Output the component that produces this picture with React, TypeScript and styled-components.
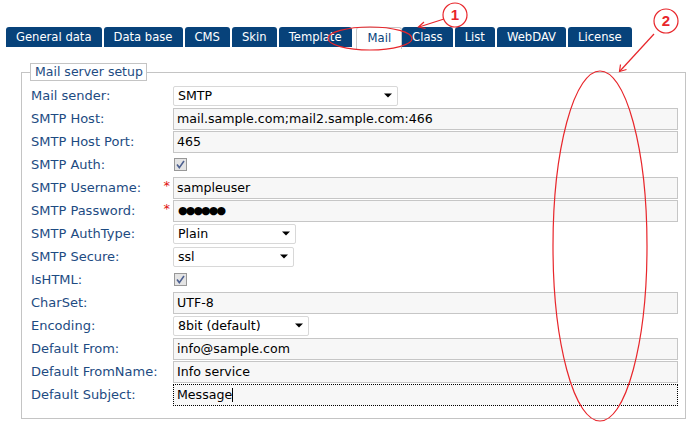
import React from "react";
import styled, { createGlobalStyle, css } from "styled-components";

// GLOBAL
const GlobalStyle = createGlobalStyle`
  html, body {
    margin: 0;
    padding: 0;
    background: #ffffff;
  }
  body {
    font-family: "DejaVu Sans", Verdana, sans-serif;
  }
`;

const BLUE = "#07427a";
const LABEL = "#1d4b82";
const RED = "#e8262b";

// LAYOUT
const Page = styled.div`
  position: relative;
  width: 691px;
  height: 426px;
  box-sizing: border-box;
  padding: 27px 5px 0 6px;
  overflow: hidden;
`;

const TabBar = styled.div`
  display: flex;
  gap: 2px;
  height: 22px;
`;

const Tab = styled.div<{ $active?: boolean }>`
  height: 20px;
  line-height: 20px;
  padding: 0 10px 0 10px;
  font-size: 11.6px;
  color: #ffffff;
  background: ${BLUE};
  border-radius: 3px 3px 0 0;
  white-space: nowrap;
  ${({ $active }) =>
    $active &&
    css`
      height: 21px;
      line-height: 20px;
      margin: 0 -2px 0 2px;
      background: #ffffff;
      color: ${BLUE};
      border: 1px solid #c8c8c8;
      border-bottom: none;
      padding: 0 10px 0 11px;
    `}
`;

const FieldSet = styled.fieldset`
  margin: 14px 0 0 15px;
  border: 1px solid #c4c4c4;
  padding: 3px 7px 12px 9px;
  min-inline-size: 0;
`;

const Legend = styled.legend`
  margin-left: -1px;
  border: 1px solid #c4c4c4;
  padding: 0 3px 0 4px;
  line-height: 16px;
  font-size: 12.5px;
  color: ${LABEL};
`;

const FormGrid = styled.div`
  display: grid;
  grid-template-columns: 142px 1fr;
  grid-auto-rows: 23px;
  align-items: center;
`;

const Label = styled.div`
  display: flex;
  justify-content: space-between;
  align-items: center;
  font-size: 13px;
  color: ${LABEL};
  white-space: nowrap;
`;

const Required = styled.span`
  color: #e01010;
  font-size: 13px;
  margin-right: 3px;
  position: relative;
  top: -2px;
`;

const Control = styled.div`
  display: flex;
  align-items: center;
`;

const Field = styled.div<{ $focused?: boolean }>`
  flex: 1;
  height: 22px;
  box-sizing: border-box;
  border: 1px solid #c6c6c6;
  background: #f7f7f7;
  padding: 0 3px;
  line-height: 20px;
  font-size: 12.6px;
  color: #000000;
  white-space: nowrap;
  overflow: hidden;
  display: flex;
  align-items: center;
  ${({ $focused }) =>
    $focused &&
    css`
      border: 1px dotted #000000;
    `}
`;

const Dots = styled.span`
  font-size: 11px;
  letter-spacing: -1.9px;
  padding-left: 1px;
`;

const Caret = styled.span`
  display: inline-block;
  width: 1px;
  height: 14px;
  background: #000000;
`;

const SelectBox = styled.div<{ $width: number }>`
  width: ${({ $width }) => $width}px;
  height: 20px;
  box-sizing: border-box;
  border: 1px solid #d8d8d8;
  border-radius: 2px;
  background: #ffffff;
  padding: 0 5px 0 4px;
  display: flex;
  align-items: center;
  justify-content: space-between;
  font-size: 12.6px;
  color: #000000;
`;

const CheckWrap = styled.div`
  width: 13px;
  height: 13px;
  margin-left: 1px;
  display: flex;
`;

const Overlay = styled.svg`
  position: absolute;
  left: 0;
  top: 0;
  pointer-events: none;
`;

// PARTS
const Arrow = () => (
  <svg width="8" height="5" viewBox="0 0 8 5">
    <path d="M0 0.5 H8 L4 4.5 Z" fill="#000" />
  </svg>
);

const CheckBox = () => (
  <CheckWrap>
    <svg width="13" height="13" viewBox="0 0 13 13">
      <rect x="0.5" y="0.5" width="12" height="12" fill="#e4e4e4" stroke="#989898" />
      <path d="M3 6.5 L5.3 9.6 L10 3" fill="none" stroke="#4d6090" strokeWidth="1.6" />
    </svg>
  </CheckWrap>
);

type Row = {
  label: string;
  kind: "text" | "select" | "check" | "password" | "focus";
  value?: string;
  width?: number;
  required?: boolean;
};

const rows: Row[] = [
  { label: "Mail sender:", kind: "select", value: "SMTP", width: 225 },
  { label: "SMTP Host:", kind: "text", value: "mail.sample.com;mail2.sample.com:466" },
  { label: "SMTP Host Port:", kind: "text", value: "465" },
  { label: "SMTP Auth:", kind: "check" },
  { label: "SMTP Username:", kind: "text", value: "sampleuser", required: true },
  { label: "SMTP Password:", kind: "password", value: "●●●●●●", required: true },
  { label: "SMTP AuthType:", kind: "select", value: "Plain", width: 123 },
  { label: "SMTP Secure:", kind: "select", value: "ssl", width: 121 },
  { label: "IsHTML:", kind: "check" },
  { label: "CharSet:", kind: "text", value: "UTF-8" },
  { label: "Encoding:", kind: "select", value: "8bit (default)", width: 136 },
  { label: "Default From:", kind: "text", value: "info@sample.com" },
  { label: "Default FromName:", kind: "text", value: "Info service" },
  { label: "Default Subject:", kind: "focus", value: "Message" },
];

const tabs = [
  "General data",
  "Data base",
  "CMS",
  "Skin",
  "Template",
  "Mail",
  "Class",
  "List",
  "WebDAV",
  "License",
];

const renderControl = (row: Row) => {
  switch (row.kind) {
    case "select":
      return (
        <SelectBox $width={row.width || 120}>
          <span>{row.value}</span>
          <Arrow />
        </SelectBox>
      );
    case "check":
      return <CheckBox />;
    case "password":
      return (
        <Field>
          <Dots>{row.value}</Dots>
        </Field>
      );
    case "focus":
      return (
        <Field $focused>
          {row.value}
          <Caret />
        </Field>
      );
    default:
      return <Field>{row.value}</Field>;
  }
};

const Annotations = () => (
  <Overlay width="691" height="426" viewBox="0 0 691 426">
    <g fill="none" stroke={RED} strokeWidth="1.2">
      <ellipse cx="370" cy="38.5" rx="42" ry="11.5" />
      <ellipse cx="600" cy="246" rx="47" ry="175" />
      <line x1="444" y1="19" x2="419" y2="27" />
      <path d="M424 22 L418.5 27 L425.5 28.5" />
      <line x1="654" y1="34" x2="620" y2="71" />
      <path d="M620.5 64.5 L619.5 71.5 L626.5 69.5" />
    </g>
    <circle cx="455" cy="15" r="12" fill="#fff" stroke={RED} strokeWidth="1.2" />
    <circle cx="666" cy="21" r="12" fill="#fff" stroke={RED} strokeWidth="1.2" />
    <text
      x="455"
      y="20"
      textAnchor="middle"
      fontFamily="Liberation Sans, Arial, sans-serif"
      fontWeight="bold"
      fontSize="15"
      fill={RED}
    >
      1
    </text>
    <text
      x="666"
      y="26"
      textAnchor="middle"
      fontFamily="Liberation Sans, Arial, sans-serif"
      fontWeight="bold"
      fontSize="15"
      fill={RED}
    >
      2
    </text>
  </Overlay>
);

const App = () => {
  return (
    <>
      <GlobalStyle />
      <Page>
        <TabBar>
          {tabs.map(tab => (
            <Tab key={tab} $active={tab === "Mail"}>
              {tab}
            </Tab>
          ))}
        </TabBar>
        <FieldSet>
          <Legend>Mail server setup</Legend>
          <FormGrid>
            {rows.map(row => (
              <React.Fragment key={row.label}>
                <Label>
                  <span>{row.label}</span>
                  {row.required && <Required>*</Required>}
                </Label>
                <Control>{renderControl(row)}</Control>
              </React.Fragment>
            ))}
          </FormGrid>
        </FieldSet>
        <Annotations />
      </Page>
    </>
  );
};

export default App;
